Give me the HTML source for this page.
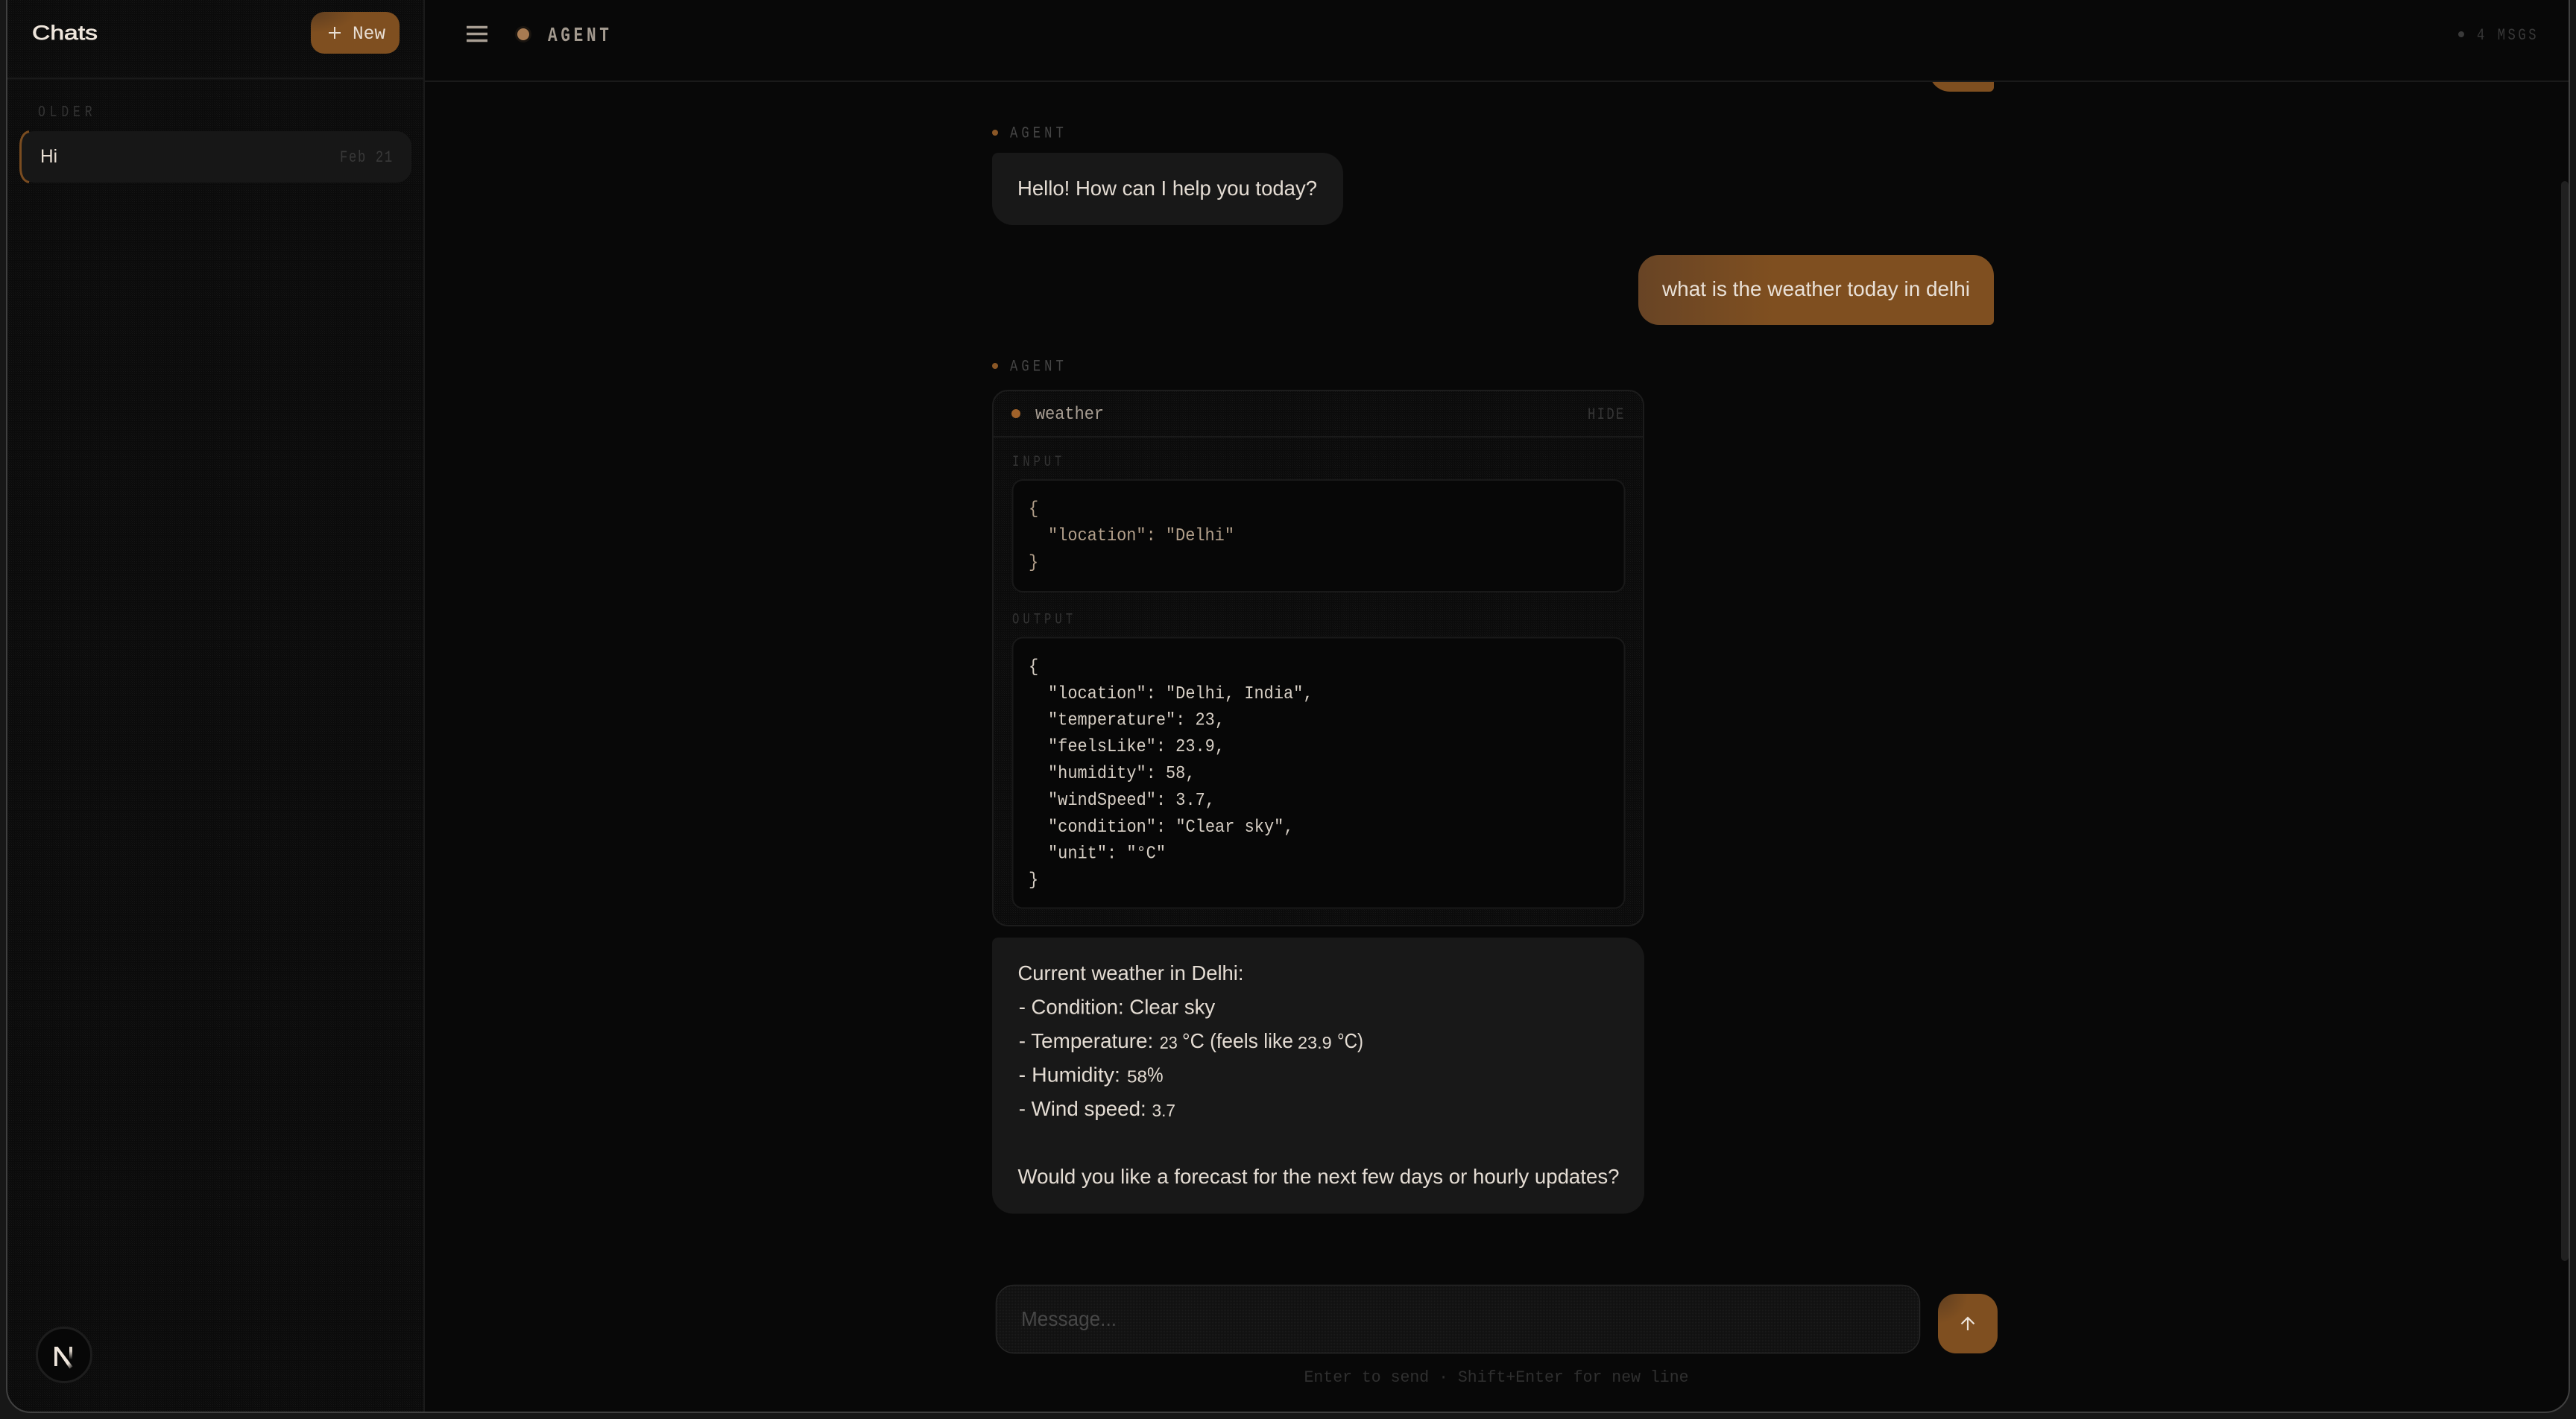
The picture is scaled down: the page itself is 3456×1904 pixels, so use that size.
<!DOCTYPE html>
<html lang="en"><head><meta charset="utf-8"><title>Chats</title>
<style>
html,body{margin:0;padding:0;background:#171717;width:3456px;height:1904px;overflow:hidden}
svg{display:block}
text{white-space:pre}
.s{font-family:"Liberation Sans",sans-serif;font-size:28px;fill:#e4dcd3}
.m{font-family:"Liberation Mono",monospace}
.c{font-family:"Liberation Mono",monospace;font-size:24px;fill:#d8d0c6}
.i{fill:#b3a08b}
.l{font-family:"Liberation Mono",monospace;font-size:21px;fill:#363636}
</style></head><body>
<svg xmlns="http://www.w3.org/2000/svg" width="3456" height="1904" viewBox="0 0 3456 1904">
<defs>
<pattern id="d1" width="3" height="3" patternUnits="userSpaceOnUse"><rect width="3" height="3" fill="#0b0b0b"/><rect width="1" height="1" fill="#161616"/><rect x="2" y="2" width="1" height="1" fill="#121212"/></pattern>
<pattern id="d2" width="3" height="3" patternUnits="userSpaceOnUse"><rect width="3" height="3" fill="#0b0b0b"/><rect width="1" height="1" fill="#171717"/><rect x="2" y="2" width="1" height="1" fill="#131313"/></pattern>
<pattern id="d3" width="2" height="2" patternUnits="userSpaceOnUse"><rect width="2" height="2" fill="#111"/><rect width="1" height="1" fill="#1b1b1b"/></pattern>
<radialGradient id="tl" cx="0" cy="0" r="1" gradientUnits="objectBoundingBox"><stop offset="0" stop-color="#5f3e20"/><stop offset=".5" stop-color="#7f4f20"/></radialGradient>
<linearGradient id="lg" x1="0" y1="0" x2="1" y2="0"><stop offset="0" stop-color="#684425"/><stop offset=".38" stop-color="#7f4f20"/></linearGradient>
<linearGradient id="n1" x1="0" y1="0" x2="1" y2="1"><stop offset=".75" stop-color="#efe6dc"/><stop offset="1" stop-color="#efe6dc" stop-opacity="0"/></linearGradient>
<linearGradient id="n2" x1="0" y1="0" x2="0" y2="1"><stop offset=".35" stop-color="#d8cfc5"/><stop offset="1" stop-color="#efe6dc" stop-opacity="0"/></linearGradient>
</defs>

<!-- window -->
<rect width="3456" height="1904" fill="#171717"/>
<rect x="9" y="-60" width="3438" height="1955" rx="32" fill="#080808"/>

<!-- sidebar -->
<path d="M9 0H568V1895H41A32 32 0 0 1 9 1863Z" fill="url(#d1)"/>
<rect x="568" y="0" width="2" height="1895" fill="#1a1a1a"/>
<rect x="10" y="104" width="558" height="2.5" fill="#1a1a1a"/>
<text x="43" y="53" textLength="88" lengthAdjust="spacingAndGlyphs" stroke="#efe6dc" stroke-width=".7" style="font-family:'Liberation Sans',sans-serif;font-size:27px;fill:#efe6dc">Chats</text>
<rect x="417" y="16" width="119" height="56" rx="18" fill="url(#tl)"/>
<path d="M449 36V52M441 44H457" stroke="#e8ded3" stroke-width="2" fill="none"/>
<text class="m" x="473" y="52" textLength="44" lengthAdjust="spacingAndGlyphs" style="font-size:25px;fill:#e8ded3">New</text>
<text class="l" transform="translate(51 156) scale(.78 1)" textLength="93" lengthAdjust="spacing" style="fill:#333">OLDER</text>
<path d="M46 176H532A20 20 0 0 1 552 196V225A20 20 0 0 1 532 245H46A20 20 0 0 1 26 225V196A20 20 0 0 1 46 176Z" fill="#171717"/>
<path d="M39 176.500C31 178 27.500 186 27.500 196V225C27.500 235 31 243 39 244.500" fill="none" stroke="#7a4c20" stroke-width="3"/>
<text x="54" y="218" textLength="23" lengthAdjust="spacingAndGlyphs" style="font-family:'Liberation Sans',sans-serif;font-size:25px;fill:#e8ded3">Hi</text>
<text class="l" transform="translate(456 217) scale(.78 1)" textLength="90" lengthAdjust="spacing" style="fill:#393939;font-size:22px">Feb 21</text>
<circle cx="86" cy="1818" r="36.500" fill="#070707" stroke="#1d1d1d" stroke-width="3"/>
<path d="M73 1807H76.800V1833H73Z" fill="#efe6dc"/>
<path d="M73 1807H77.500L97.500 1833.500L93.500 1836.500Z" fill="url(#n1)"/>
<path d="M93 1807H97V1824H93Z" fill="url(#n2)"/>

<!-- main header -->
<rect x="570" y="108" width="2877" height="2" fill="#1a1a1a"/>
<path d="M626 36.500H654M626 45.500H654M626 54.500H654" stroke="#a89e93" stroke-width="3.400" fill="none"/>
<circle cx="702" cy="46" r="11" fill="#a0754c" opacity=".12"/>
<circle cx="702" cy="46" r="8" fill="#a87b52"/>
<text class="m" transform="translate(735 55) scale(.78 1)" textLength="105" lengthAdjust="spacing" style="font-size:27px;font-weight:700;fill:#a39a8f">AGENT</text>
<circle cx="3302" cy="46" r="4" fill="#3a3a3a"/>
<text class="m" transform="translate(3323 53) scale(.78 1)" textLength="102" lengthAdjust="spacing" style="font-size:22px;fill:#383838">4 MSGS</text>

<!-- scrollbar -->
<rect x="3436" y="243" width="10" height="1449" rx="5" fill="#202020"/>

<!-- earlier user bubble, clipped -->
<path d="M2592.400 110A28 28 0 0 0 2616 123H2669A6 6 0 0 0 2675 117V110Z" fill="#7f4f20"/>

<!-- agent 1 -->
<circle cx="1335" cy="178" r="4" fill="#8a5726"/>
<text class="l" transform="translate(1355 184.500) scale(.78 1)" textLength="92" lengthAdjust="spacing" style="fill:#454545;font-size:22px">AGENT</text>
<path d="M1339 205H1774A28 28 0 0 1 1802 233V274A28 28 0 0 1 1774 302H1359A28 28 0 0 1 1331 274V213A8 8 0 0 1 1339 205Z" fill="#181818"/>
<text class="s" x="1365" y="262" textLength="402" lengthAdjust="spacingAndGlyphs">Hello! How can I help you today?</text>

<!-- user -->
<path d="M2226 342H2647A28 28 0 0 1 2675 370V430A6 6 0 0 1 2669 436H2226A28 28 0 0 1 2198 408V370A28 28 0 0 1 2226 342Z" fill="url(#lg)"/>
<text class="s" x="2230" y="397" textLength="413" lengthAdjust="spacingAndGlyphs" style="fill:#e9e0d6">what is the weather today in delhi</text>

<!-- agent 2 -->
<circle cx="1335" cy="491" r="4" fill="#8a5726"/>
<text class="l" transform="translate(1355 497.500) scale(.78 1)" textLength="92" lengthAdjust="spacing" style="fill:#454545;font-size:22px">AGENT</text>

<!-- tool card -->
<rect x="1332" y="524" width="873" height="718" rx="20" fill="url(#d2)" stroke="#1c1c1c" stroke-width="2"/>
<rect x="1333" y="585" width="871" height="2" fill="#1a1a1a"/>
<circle cx="1363" cy="555" r="6" fill="#a0622a"/>
<text class="m" x="1389" y="562" textLength="92" lengthAdjust="spacingAndGlyphs" style="font-size:24px;fill:#a89e93">weather</text>
<text class="l" transform="translate(2130 562) scale(.78 1)" textLength="62" lengthAdjust="spacing" style="fill:#363636;font-size:22px">HIDE</text>
<text class="l" transform="translate(1358 625) scale(.78 1)" textLength="85" lengthAdjust="spacing" style="font-size:20px;fill:#333">INPUT</text>
<rect x="1358.500" y="644" width="821" height="150" rx="14" fill="#070707" stroke="#191919" stroke-width="2"/>
<text class="c i" x="1380" y="689" textLength="13.200" lengthAdjust="spacingAndGlyphs">{</text>
<text class="c i" x="1406" y="725" textLength="250" lengthAdjust="spacingAndGlyphs">"location": "Delhi"</text>
<text class="c i" x="1380" y="761" textLength="13.200" lengthAdjust="spacingAndGlyphs">}</text>
<text class="l" transform="translate(1358 836.500) scale(.78 1)" textLength="104" lengthAdjust="spacing" style="font-size:20px;fill:#333">OUTPUT</text>
<rect x="1358.500" y="855.500" width="821" height="363" rx="14" fill="#070707" stroke="#191919" stroke-width="2"/>
<text class="c" x="1380" y="901" textLength="13.200" lengthAdjust="spacingAndGlyphs">{</text>
<text class="c" x="1406" y="937" textLength="355.500" lengthAdjust="spacingAndGlyphs">"location": "Delhi, India",</text>
<text class="c" x="1406" y="972.500" textLength="237" lengthAdjust="spacingAndGlyphs">"temperature": 23,</text>
<text class="c" x="1406" y="1008" textLength="237" lengthAdjust="spacingAndGlyphs">"feelsLike": 23.9,</text>
<text class="c" x="1406" y="1044" textLength="197.500" lengthAdjust="spacingAndGlyphs">"humidity": 58,</text>
<text class="c" x="1406" y="1080" textLength="224" lengthAdjust="spacingAndGlyphs">"windSpeed": 3.7,</text>
<text class="c" x="1406" y="1116" textLength="329.500" lengthAdjust="spacingAndGlyphs">"condition": "Clear sky",</text>
<text class="c" x="1406" y="1151.500" textLength="158" lengthAdjust="spacingAndGlyphs">"unit": "°C"</text>
<text class="c" x="1380" y="1187" textLength="13.200" lengthAdjust="spacingAndGlyphs">}</text>

<!-- agent reply -->
<path d="M1339 1258H2178A28 28 0 0 1 2206 1286V1600.500A28 28 0 0 1 2178 1628.500H1359A28 28 0 0 1 1331 1600.500V1266A8 8 0 0 1 1339 1258Z" fill="#181818"/>
<text class="s" x="1365.500" y="1315" textLength="303" lengthAdjust="spacingAndGlyphs">Current weather in Delhi:</text>
<text class="s" x="1366.700" y="1360.500" textLength="263.500" lengthAdjust="spacingAndGlyphs">- Condition: Clear sky</text>
<text class="s" x="1366.700" y="1406" textLength="180.600" lengthAdjust="spacingAndGlyphs">- Temperature:</text>
<text class="s" x="1555.800" y="1407" textLength="24" lengthAdjust="spacingAndGlyphs" style="font-size:23px">23</text>
<text class="s" x="1586" y="1406" textLength="149" lengthAdjust="spacingAndGlyphs">°C (feels like</text>
<text class="s" x="1741" y="1407" textLength="45.700" lengthAdjust="spacingAndGlyphs" style="font-size:23px">23.9</text>
<text class="s" x="1794" y="1406" textLength="35" lengthAdjust="spacingAndGlyphs">°C)</text>
<text class="s" x="1366.700" y="1451.500" textLength="136.300" lengthAdjust="spacingAndGlyphs">- Humidity:</text>
<text class="s" x="1512" y="1452.500" textLength="27" lengthAdjust="spacingAndGlyphs" style="font-size:23px">58</text>
<text class="s" x="1539" y="1451.500" textLength="21.600" lengthAdjust="spacingAndGlyphs">%</text>
<text class="s" x="1366.700" y="1497" textLength="171" lengthAdjust="spacingAndGlyphs">- Wind speed:</text>
<text class="s" x="1545.500" y="1498" textLength="31.500" lengthAdjust="spacingAndGlyphs" style="font-size:23px">3.7</text>
<text class="s" x="1365.500" y="1588" textLength="807" lengthAdjust="spacingAndGlyphs">Would you like a forecast for the next few days or hourly updates?</text>

<!-- composer -->
<rect x="1336.500" y="1724.500" width="1239" height="91" rx="24" fill="url(#d3)" stroke="#262626" stroke-width="1.500"/>
<text class="s" x="1370" y="1779" textLength="128" lengthAdjust="spacingAndGlyphs" style="fill:#474747">Message...</text>
<rect x="2600" y="1736" width="80" height="80" rx="24" fill="url(#tl)"/>
<path d="M2640 1785V1768M2631.500 1776.500L2640 1768L2648.500 1776.500" stroke="#ece3d9" stroke-width="2.200" fill="none"/>
<text class="m" x="1749.500" y="1854" textLength="516" lengthAdjust="spacingAndGlyphs" style="font-size:22px;fill:#303030">Enter to send · Shift+Enter for new line</text>

<!-- window edge -->
<rect x="9" y="-60" width="3438" height="1955" rx="32" fill="none" stroke="#404040" stroke-width="2"/>
</svg>
</body></html>
